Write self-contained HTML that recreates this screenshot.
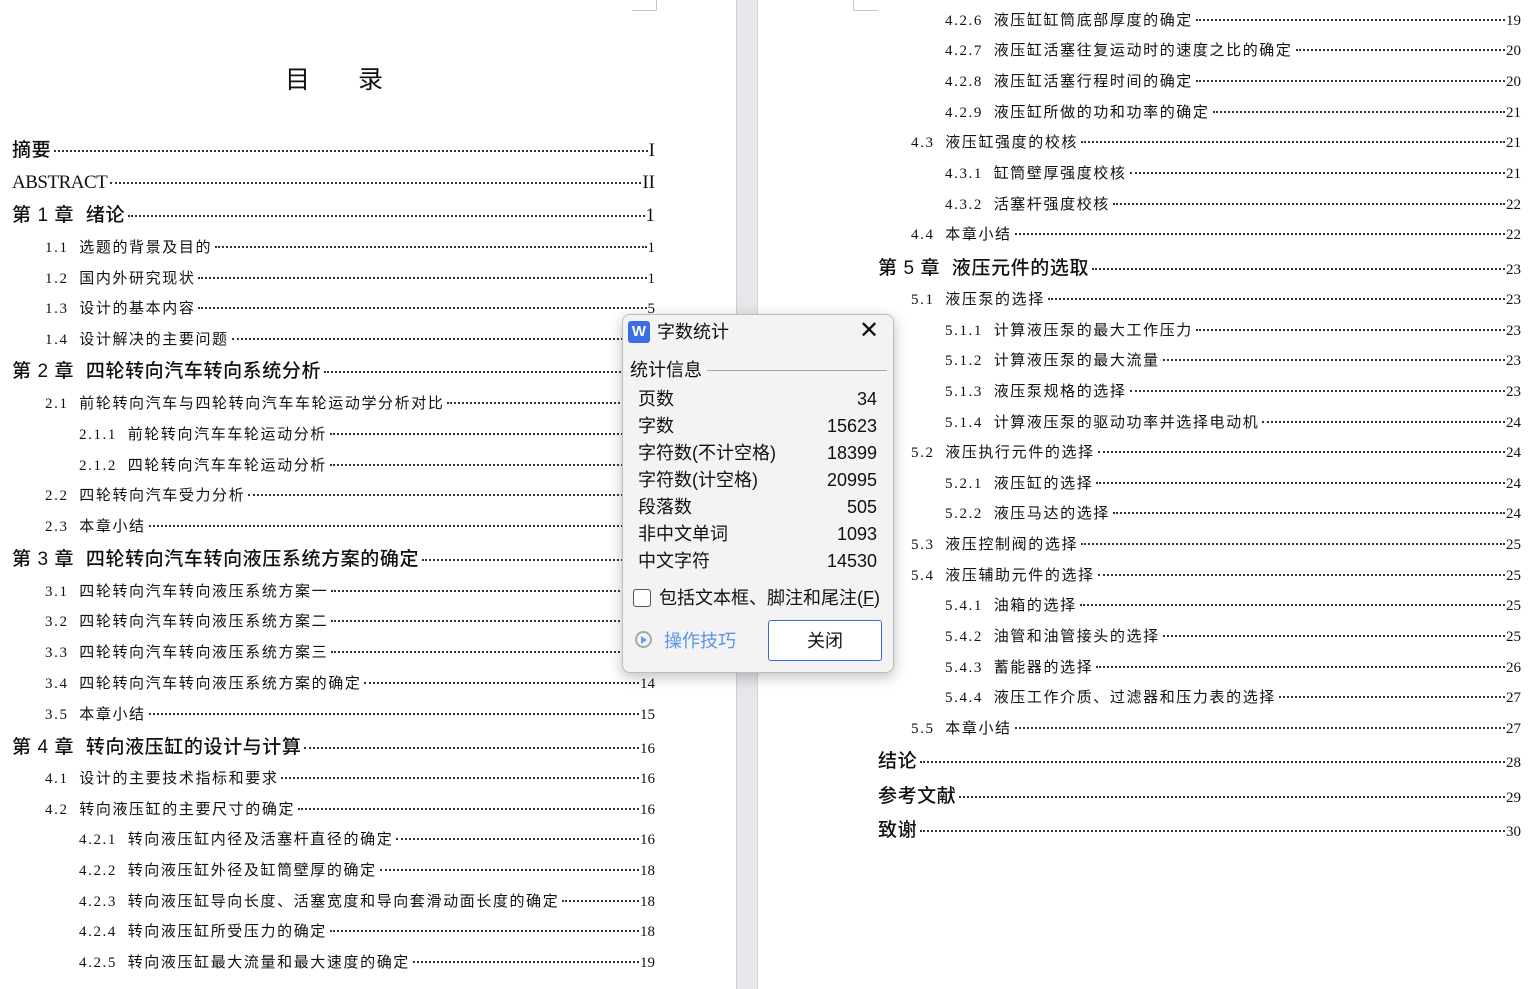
<!DOCTYPE html>
<html><head><meta charset="utf-8"><style>
html,body{margin:0;padding:0}
body{width:1531px;height:989px;position:relative;overflow:hidden;background:#fff;font-family:"Liberation Serif","Noto Sans CJK SC",serif;color:#111}
.gut{position:absolute;left:736px;top:0;width:22px;height:989px;background:#e6e7ea;border-left:1px solid #cfcfd2;border-right:1px solid #d6d6d8;box-sizing:border-box}
.l{position:absolute;display:flex;align-items:baseline;white-space:nowrap;height:24px;line-height:24px}
.l .d{flex:1;border-bottom:2px dotted #333;margin:0 1px 0 3px;transform:translateY(-4px)}
.s{font-size:15px}
.s .t{font-family:"Liberation Serif","Noto Sans CJK SC",sans-serif;letter-spacing:1.6px}
.c{font-size:19px;font-weight:500}
.c .t{font-family:"Liberation Sans","Noto Sans CJK SC",sans-serif;letter-spacing:0.6px}
.corner{position:absolute;border-color:#c8c8c8;border-style:solid;width:24px;height:10px}
.dlg{position:absolute;left:622px;top:314px;width:270px;height:357px;background:#f3f3f3;border:1px solid #bdbdbd;border-radius:8px;box-shadow:0 4px 14px rgba(0,0,0,.25);font-family:"Liberation Sans","Noto Sans CJK SC",sans-serif;font-size:18px;color:#111}
.row{position:absolute;left:15px;width:239px;display:flex;justify-content:space-between;height:27px;line-height:27px}
</style></head><body>
<div class="gut"></div>
<div class="corner" style="left:632px;top:0;border-width:0 1px 1px 0"></div>
<div class="corner" style="left:853px;top:0;border-width:0 0 1px 1px"></div>
<div style="position:absolute;left:285px;top:60px;font-size:25px;font-family:'Noto Sans CJK SC',sans-serif;letter-spacing:48px">目录</div>

<div class="l c" style="left:12px;top:139px;width:643px"><span class="t">摘要</span><span class="d"></span><span>I</span></div>
<div class="l c" style="left:12px;top:171px;width:643px"><span class="t" style="font-family:'Liberation Serif';font-weight:400;letter-spacing:-0.5px">ABSTRACT</span><span class="d"></span><span>II</span></div>
<div class="l c" style="left:12px;top:204px;width:643px"><span class="t">第 1 章&nbsp; 绪论</span><span class="d"></span><span>1</span></div>
<div class="l s" style="left:45px;top:236px;width:610px"><span class="t">1.1&nbsp; 选题的背景及目的</span><span class="d"></span><span>1</span></div>
<div class="l s" style="left:45px;top:267px;width:610px"><span class="t">1.2&nbsp; 国内外研究现状</span><span class="d"></span><span>1</span></div>
<div class="l s" style="left:45px;top:297px;width:610px"><span class="t">1.3&nbsp; 设计的基本内容</span><span class="d"></span><span>5</span></div>
<div class="l s" style="left:45px;top:328px;width:610px"><span class="t">1.4&nbsp; 设计解决的主要问题</span><span class="d"></span><span>5</span></div>
<div class="l c" style="left:12px;top:360px;width:643px"><span class="t">第 2 章&nbsp; 四轮转向汽车转向系统分析</span><span class="d"></span><span>6</span></div>
<div class="l s" style="left:45px;top:392px;width:610px"><span class="t">2.1&nbsp; 前轮转向汽车与四轮转向汽车车轮运动学分析对比</span><span class="d"></span><span>6</span></div>
<div class="l s" style="left:79px;top:423px;width:576px"><span class="t">2.1.1&nbsp; 前轮转向汽车车轮运动分析</span><span class="d"></span><span>6</span></div>
<div class="l s" style="left:79px;top:454px;width:576px"><span class="t">2.1.2&nbsp; 四轮转向汽车车轮运动分析</span><span class="d"></span><span>7</span></div>
<div class="l s" style="left:45px;top:484px;width:610px"><span class="t">2.2&nbsp; 四轮转向汽车受力分析</span><span class="d"></span><span>8</span></div>
<div class="l s" style="left:45px;top:515px;width:610px"><span class="t">2.3&nbsp; 本章小结</span><span class="d"></span><span>9</span></div>
<div class="l c" style="left:12px;top:548px;width:643px"><span class="t">第 3 章&nbsp; 四轮转向汽车转向液压系统方案的确定</span><span class="d"></span><span>10</span></div>
<div class="l s" style="left:45px;top:580px;width:610px"><span class="t">3.1&nbsp; 四轮转向汽车转向液压系统方案一</span><span class="d"></span><span>10</span></div>
<div class="l s" style="left:45px;top:610px;width:610px"><span class="t">3.2&nbsp; 四轮转向汽车转向液压系统方案二</span><span class="d"></span><span>11</span></div>
<div class="l s" style="left:45px;top:641px;width:610px"><span class="t">3.3&nbsp; 四轮转向汽车转向液压系统方案三</span><span class="d"></span><span>13</span></div>
<div class="l s" style="left:45px;top:672px;width:610px"><span class="t">3.4&nbsp; 四轮转向汽车转向液压系统方案的确定</span><span class="d"></span><span>14</span></div>
<div class="l s" style="left:45px;top:703px;width:610px"><span class="t">3.5&nbsp; 本章小结</span><span class="d"></span><span>15</span></div>
<div class="l c" style="left:12px;top:736px;width:643px"><span class="t">第 4 章&nbsp; 转向液压缸的设计与计算</span><span class="d"></span><span style="font-size:15px">16</span></div>
<div class="l s" style="left:45px;top:767px;width:610px"><span class="t">4.1&nbsp; 设计的主要技术指标和要求</span><span class="d"></span><span>16</span></div>
<div class="l s" style="left:45px;top:798px;width:610px"><span class="t">4.2&nbsp; 转向液压缸的主要尺寸的确定</span><span class="d"></span><span>16</span></div>
<div class="l s" style="left:79px;top:828px;width:576px"><span class="t">4.2.1&nbsp; 转向液压缸内径及活塞杆直径的确定</span><span class="d"></span><span>16</span></div>
<div class="l s" style="left:79px;top:859px;width:576px"><span class="t">4.2.2&nbsp; 转向液压缸外径及缸筒壁厚的确定</span><span class="d"></span><span>18</span></div>
<div class="l s" style="left:79px;top:890px;width:576px"><span class="t">4.2.3&nbsp; 转向液压缸导向长度、活塞宽度和导向套滑动面长度的确定</span><span class="d"></span><span>18</span></div>
<div class="l s" style="left:79px;top:920px;width:576px"><span class="t">4.2.4&nbsp; 转向液压缸所受压力的确定</span><span class="d"></span><span>18</span></div>
<div class="l s" style="left:79px;top:951px;width:576px"><span class="t">4.2.5&nbsp; 转向液压缸最大流量和最大速度的确定</span><span class="d"></span><span>19</span></div>

<div class="l s" style="left:945px;top:9px;width:576px"><span class="t">4.2.6&nbsp; 液压缸缸筒底部厚度的确定</span><span class="d"></span><span>19</span></div>
<div class="l s" style="left:945px;top:39px;width:576px"><span class="t">4.2.7&nbsp; 液压缸活塞往复运动时的速度之比的确定</span><span class="d"></span><span>20</span></div>
<div class="l s" style="left:945px;top:70px;width:576px"><span class="t">4.2.8&nbsp; 液压缸活塞行程时间的确定</span><span class="d"></span><span>20</span></div>
<div class="l s" style="left:945px;top:101px;width:576px"><span class="t">4.2.9&nbsp; 液压缸所做的功和功率的确定</span><span class="d"></span><span>21</span></div>
<div class="l s" style="left:911px;top:131px;width:610px"><span class="t">4.3&nbsp; 液压缸强度的校核</span><span class="d"></span><span>21</span></div>
<div class="l s" style="left:945px;top:162px;width:576px"><span class="t">4.3.1&nbsp; 缸筒壁厚强度校核</span><span class="d"></span><span>21</span></div>
<div class="l s" style="left:945px;top:193px;width:576px"><span class="t">4.3.2&nbsp; 活塞杆强度校核</span><span class="d"></span><span>22</span></div>
<div class="l s" style="left:911px;top:223px;width:610px"><span class="t">4.4&nbsp; 本章小结</span><span class="d"></span><span>22</span></div>
<div class="l c" style="left:878px;top:257px;width:643px"><span class="t">第 5 章&nbsp; 液压元件的选取</span><span class="d"></span><span style="font-size:15px">23</span></div>
<div class="l s" style="left:911px;top:288px;width:610px"><span class="t">5.1&nbsp; 液压泵的选择</span><span class="d"></span><span>23</span></div>
<div class="l s" style="left:945px;top:319px;width:576px"><span class="t">5.1.1&nbsp; 计算液压泵的最大工作压力</span><span class="d"></span><span>23</span></div>
<div class="l s" style="left:945px;top:349px;width:576px"><span class="t">5.1.2&nbsp; 计算液压泵的最大流量</span><span class="d"></span><span>23</span></div>
<div class="l s" style="left:945px;top:380px;width:576px"><span class="t">5.1.3&nbsp; 液压泵规格的选择</span><span class="d"></span><span>23</span></div>
<div class="l s" style="left:945px;top:411px;width:576px"><span class="t">5.1.4&nbsp; 计算液压泵的驱动功率并选择电动机</span><span class="d"></span><span>24</span></div>
<div class="l s" style="left:911px;top:441px;width:610px"><span class="t">5.2&nbsp; 液压执行元件的选择</span><span class="d"></span><span>24</span></div>
<div class="l s" style="left:945px;top:472px;width:576px"><span class="t">5.2.1&nbsp; 液压缸的选择</span><span class="d"></span><span>24</span></div>
<div class="l s" style="left:945px;top:502px;width:576px"><span class="t">5.2.2&nbsp; 液压马达的选择</span><span class="d"></span><span>24</span></div>
<div class="l s" style="left:911px;top:533px;width:610px"><span class="t">5.3&nbsp; 液压控制阀的选择</span><span class="d"></span><span>25</span></div>
<div class="l s" style="left:911px;top:564px;width:610px"><span class="t">5.4&nbsp; 液压辅助元件的选择</span><span class="d"></span><span>25</span></div>
<div class="l s" style="left:945px;top:594px;width:576px"><span class="t">5.4.1&nbsp; 油箱的选择</span><span class="d"></span><span>25</span></div>
<div class="l s" style="left:945px;top:625px;width:576px"><span class="t">5.4.2&nbsp; 油管和油管接头的选择</span><span class="d"></span><span>25</span></div>
<div class="l s" style="left:945px;top:656px;width:576px"><span class="t">5.4.3&nbsp; 蓄能器的选择</span><span class="d"></span><span>26</span></div>
<div class="l s" style="left:945px;top:686px;width:576px"><span class="t">5.4.4&nbsp; 液压工作介质、过滤器和压力表的选择</span><span class="d"></span><span>27</span></div>
<div class="l s" style="left:911px;top:717px;width:610px"><span class="t">5.5&nbsp; 本章小结</span><span class="d"></span><span>27</span></div>
<div class="l c" style="left:878px;top:750px;width:643px"><span class="t">结论</span><span class="d"></span><span style="font-size:15px">28</span></div>
<div class="l c" style="left:878px;top:785px;width:643px"><span class="t">参考文献</span><span class="d"></span><span style="font-size:15px">29</span></div>
<div class="l c" style="left:878px;top:819px;width:643px"><span class="t">致谢</span><span class="d"></span><span style="font-size:15px">30</span></div>

<div class="dlg">
 <div style="position:absolute;left:5px;top:6px;width:22px;height:22px;background:#3d6ce8;border-radius:3px;color:#fff;font:bold 15px 'Liberation Sans';text-align:center;line-height:21px">W</div>
 <div style="position:absolute;left:34px;top:4px;line-height:26px">字数统计</div>
 <div style="position:absolute;left:236px;top:2px;font-size:24px;font-weight:300;line-height:28px">✕</div>
 <div style="position:absolute;left:7px;top:42px;line-height:26px">统计信息</div>
 <div style="position:absolute;left:84px;top:55px;width:180px;height:1px;background:#a8a8a8"></div>
 <div class="row" style="top:71px"><span>页数</span><span>34</span></div>
 <div class="row" style="top:98px"><span>字数</span><span>15623</span></div>
 <div class="row" style="top:125px"><span>字符数(不计空格)</span><span>18399</span></div>
 <div class="row" style="top:152px"><span>字符数(计空格)</span><span>20995</span></div>
 <div class="row" style="top:179px"><span>段落数</span><span>505</span></div>
 <div class="row" style="top:206px"><span>非中文单词</span><span>1093</span></div>
 <div class="row" style="top:233px"><span>中文字符</span><span>14530</span></div>
 <div style="position:absolute;left:10px;top:274px;width:16px;height:16px;border:1px solid #555;border-radius:3px;background:#fff"></div>
 <div style="position:absolute;left:36px;top:270px;line-height:26px">包括文本框、脚注和尾注(<u>F</u>)</div>
 <div style="position:absolute;left:12px;top:316px;width:17px;height:17px;border:2px solid #a8a8a8;border-radius:50%;box-sizing:border-box"></div>
 <div style="position:absolute;left:18px;top:321px;width:0;height:0;border-left:6px solid #6f9ce8;border-top:4px solid transparent;border-bottom:4px solid transparent"></div>
 <div style="position:absolute;left:41px;top:313px;line-height:26px;color:#5b93e8">操作技巧</div>
 <div style="position:absolute;left:145px;top:305px;width:114px;height:41px;border:1px solid #2f6fd6;border-radius:3px;background:#fff;text-align:center;line-height:41px;box-sizing:border-box">关闭</div>
</div>
</body></html>
